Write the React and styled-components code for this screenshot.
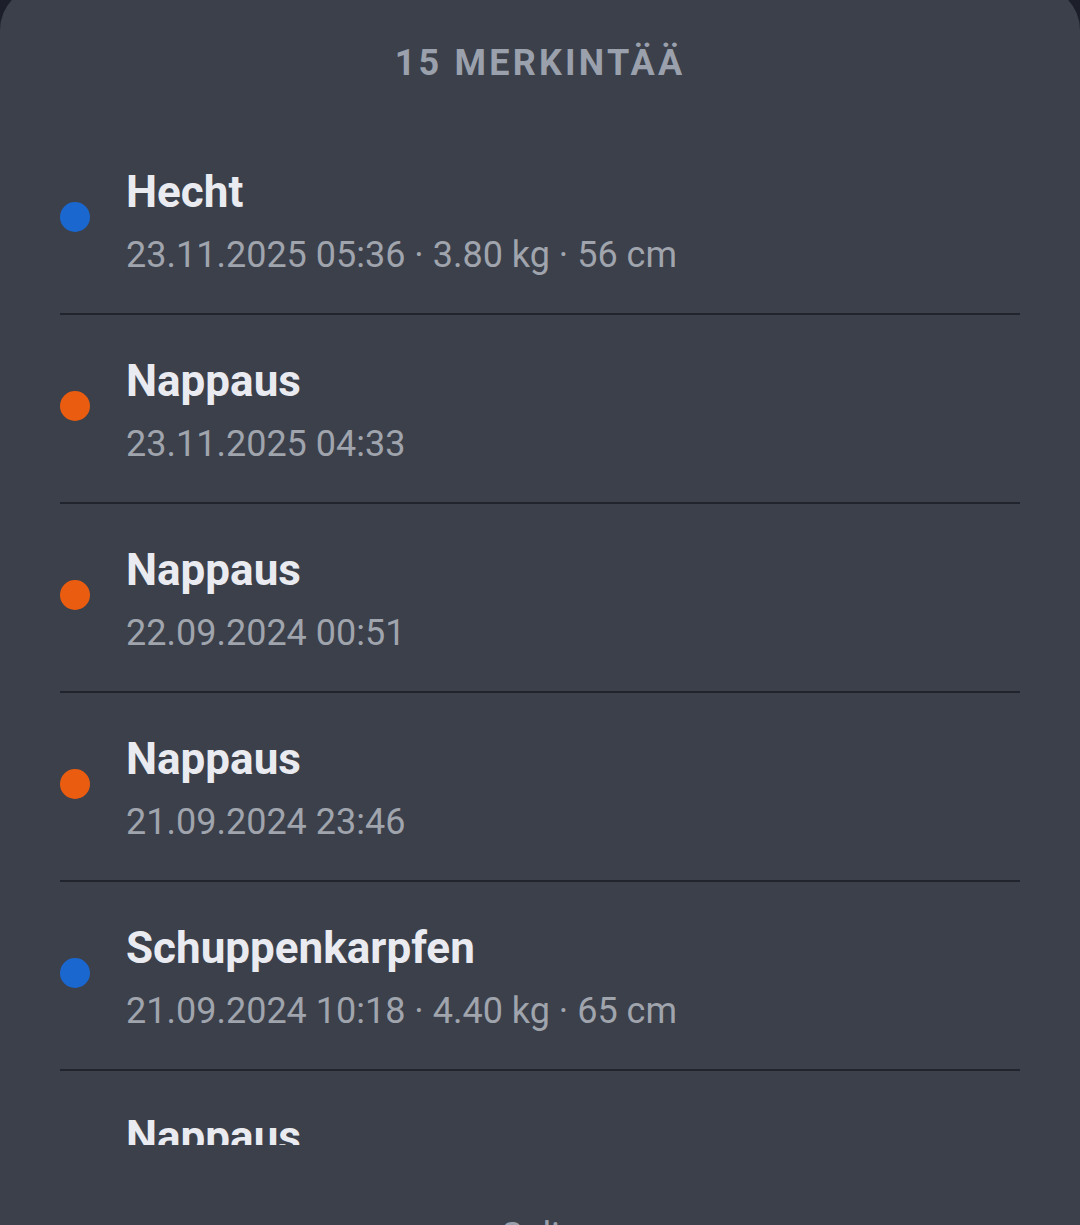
import React from "react";
import styled, { createGlobalStyle } from "styled-components";

const Global = createGlobalStyle`
  html, body {
    margin: 0;
    padding: 0;
    background: #1c1f2a;
    overflow: hidden;
  }
  body {
    font-family: Roboto, "Noto Sans", "Liberation Sans", sans-serif;
  }
`;

const Sheet = styled.div`
  width: 1080px;
  height: 1239px;
  margin-top: -14px;
  background: #3b404b;
  border-radius: 44px 44px 0 0;
  display: flex;
  flex-direction: column;
  overflow: hidden;
`;

const Header = styled.div`
  flex: none;
  height: 140px;
  box-sizing: border-box;
  padding-top: 57px;
  text-align: center;
`;

const Title = styled.h2`
  margin: 0;
  font-size: 36px;
  line-height: 40px;
  font-weight: 700;
  letter-spacing: 3.2px;
  color: #9aa0ac;
`;

const List = styled.ul`
  flex: none;
  list-style: none;
  margin: 0 60px;
  padding: 0;
  height: 1019px;
  overflow: hidden;
`;

const Row = styled.li`
  height: 189px;
  box-sizing: border-box;
  border-bottom: 2px solid #21242d;
  display: flex;
  align-items: center;
  gap: 36px;
  padding-top: 4px;
`;

const Dot = styled.span`
  flex: none;
  width: 30px;
  height: 30px;
  margin-top: -9px;
  border-radius: 50%;
  background: ${(p) => (p.$kind === "catch" ? "#1a67cf" : "#ea5c10")};
`;

const Info = styled.div`
  display: flex;
  flex-direction: column;
  gap: 16px;
`;

const Name = styled.div`
  font-size: 44px;
  line-height: 50px;
  font-weight: 700;
  color: #e9ebf0;
`;

const Meta = styled.div`
  font-size: 36px;
  line-height: 44px;
  color: #a0a4ad;
`;

const Footer = styled.div`
  flex: none;
  padding-top: 71px;
  text-align: center;
`;

const CloseButton = styled.button`
  background: none;
  border: none;
  padding: 0;
  font-family: inherit;
  font-size: 36px;
  line-height: 40px;
  color: #9aa0ac;
`;

const entries = [
  { kind: "catch", name: "Hecht", meta: "23.11.2025 05:36 · 3.80 kg · 56 cm" },
  { kind: "bite", name: "Nappaus", meta: "23.11.2025 04:33" },
  { kind: "bite", name: "Nappaus", meta: "22.09.2024 00:51" },
  { kind: "bite", name: "Nappaus", meta: "21.09.2024 23:46" },
  { kind: "catch", name: "Schuppenkarpfen", meta: "21.09.2024 10:18 · 4.40 kg · 65 cm" },
  { kind: "bite", name: "Nappaus", meta: "20.09.2024 22:12" },
];

export default function App() {
  return (
    <>
      <Global />
      <Sheet>
        <Header>
          <Title>15 MERKINTÄÄ</Title>
        </Header>
        <List>
          {entries.map((e, i) => (
            <Row key={i}>
              <Dot $kind={e.kind} />
              <Info>
                <Name>{e.name}</Name>
                <Meta>{e.meta}</Meta>
              </Info>
            </Row>
          ))}
        </List>
        <Footer>
          <CloseButton>Sulje</CloseButton>
        </Footer>
      </Sheet>
    </>
  );
}
